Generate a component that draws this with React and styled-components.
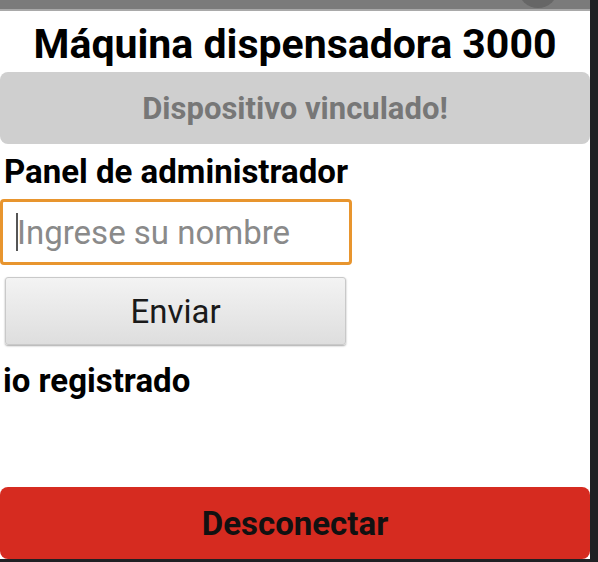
import styled, { createGlobalStyle } from "styled-components";

const GlobalStyle = createGlobalStyle`
  html, body {
    margin: 0;
    padding: 0;
    background: #202124;
  }
  * {
    box-sizing: border-box;
  }
`;

const Screen = styled.div`
  width: 598px;
  height: 562px;
  display: flex;
  overflow: hidden;
  background: #202124;
  font-family: Roboto, "Noto Sans", sans-serif;
`;

const Phone = styled.div`
  width: 590px;
  height: 559px;
  display: flex;
  flex-direction: column;
  background: #ffffff;
`;

const StatusBar = styled.div`
  position: relative;
  height: 11px;
  flex-shrink: 0;
  background: #7b7b7b;
  border-bottom: 2px solid #a9a9a9;
  overflow: hidden;
`;

const StatusDot = styled.span`
  position: absolute;
  right: 32px;
  bottom: 1px;
  width: 40px;
  height: 40px;
  border-radius: 50%;
  background: #666666;
`;

const Title = styled.h1`
  margin: 9px 0 0;
  font-size: 41px;
  line-height: 48px;
  font-weight: 700;
  text-align: center;
  color: #000;
`;

const Banner = styled.div`
  margin-top: 4px;
  height: 72px;
  flex-shrink: 0;
  border-radius: 8px;
  background: #cfcfcf;
  display: flex;
  align-items: center;
  justify-content: center;
  font-size: 31px;
  font-weight: 700;
  color: #777777;
`;

const Heading = styled.h2`
  margin: 9px 0 0 4px;
  font-size: 33px;
  line-height: 38px;
  font-weight: 700;
  color: #000;
`;

const Field = styled.div`
  position: relative;
  margin-top: 8px;
  width: 352px;
  height: 66px;
  flex-shrink: 0;
`;

const Input = styled.input`
  width: 100%;
  height: 100%;
  border: 3px solid #e8952e;
  border-radius: 4px;
  padding: 0 14px;
  font-family: Roboto, "Noto Sans", sans-serif;
  font-size: 33px;
  color: #222;
  outline: none;
  caret-color: transparent;
  &::placeholder {
    color: #8a8a8a;
  }
`;

const Caret = styled.span`
  position: absolute;
  left: 16px;
  top: 14px;
  width: 2px;
  height: 38px;
  background: #555;
`;

const Button = styled.button`
  margin: 12px 0 0 5px;
  width: 341px;
  height: 68px;
  flex-shrink: 0;
  border: 1px solid #c9c9c9;
  border-radius: 3px;
  background: linear-gradient(#f3f3f3, #dedede);
  box-shadow: 0 1px 2px rgba(0, 0, 0, 0.35);
  font-family: Roboto, "Noto Sans", sans-serif;
  font-size: 33px;
  color: #1a1a1a;
`;

const Status = styled.p`
  margin: 17px 0 0 3px;
  font-size: 33px;
  line-height: 38px;
  font-weight: 700;
  color: #000;
`;

const Spacer = styled.div`
  flex: 1;
`;

const Disconnect = styled.button`
  height: 72px;
  width: 100%;
  flex-shrink: 0;
  border: none;
  border-radius: 8px;
  background: #d62b20;
  font-family: Roboto, "Noto Sans", sans-serif;
  font-size: 33px;
  font-weight: 700;
  color: #111;
`;

export default function App() {
  return (
    <>
      <GlobalStyle />
      <Screen>
        <Phone>
          <StatusBar>
            <StatusDot />
          </StatusBar>
          <Title>Máquina dispensadora 3000</Title>
          <Banner>Dispositivo vinculado!</Banner>
          <Heading>Panel de administrador</Heading>
          <Field>
            <Input placeholder="Ingrese su nombre" />
            <Caret />
          </Field>
          <Button>Enviar</Button>
          <Status>io registrado</Status>
          <Spacer />
          <Disconnect>Desconectar</Disconnect>
        </Phone>
      </Screen>
    </>
  );
}
